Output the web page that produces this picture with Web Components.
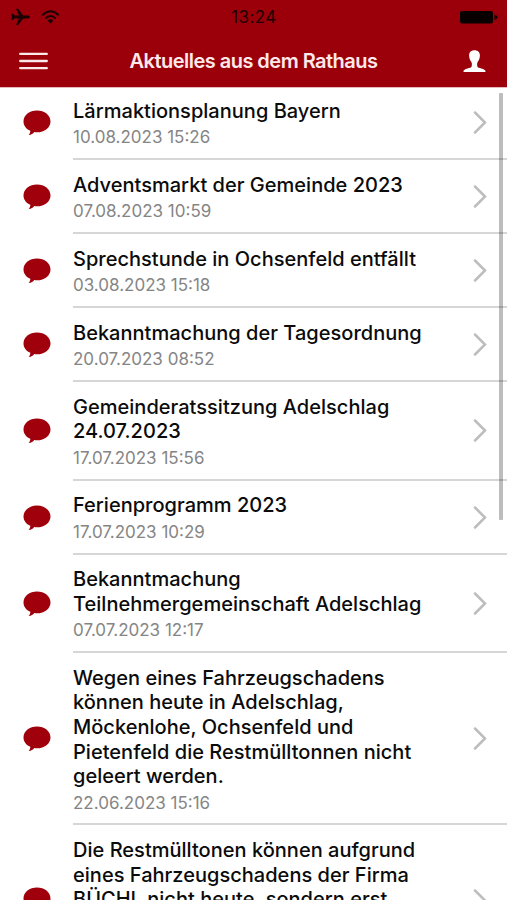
<!DOCTYPE html>
<html lang="de">
  <head>
    <meta charset="UTF-8" />
    <meta name="viewport" content="width=device-width, initial-scale=1.0" />
    <title>Aktuelles aus dem Rathaus</title>
    <style>
      html,
      body {
        margin: 0;
        height: 100%;
        overflow: hidden;
        background: #fff;
        font-family: Inter, "Liberation Sans", sans-serif;
      }
    </style>
  </head>

  <body>
    <template id="app-template">
      <style>
        :host {
          display: flex;
          flex-direction: column;
          height: 900px;
          overflow: hidden;
        }

        main {
          flex: 1;
          min-height: 0;
          position: relative;
          overflow: hidden;
        }

        .list {
          display: flex;
          flex-direction: column;
          margin-top: -2px;
        }

        .scrollbar {
          position: absolute;
          top: 5px;
          right: 4.5px;
          width: 4px;
          height: 427px;
          border-radius: 1px;
          background: rgba(0, 0, 0, 0.26);
        }
      </style>
      <slot name="header"></slot>
      <main>
        <div class="list"><slot></slot></div>
        <div class="scrollbar"></div>
      </main>
    </template>

    <template id="header-template">
      <style>
        :host {
          display: block;
          flex: none;
          height: 88px;
          background: #9b000a;
          border-bottom: 1px solid #e8b9bb;
          box-sizing: border-box;
        }

        svg {
          display: block;
        }

        .status,
        .bar {
          display: grid;
          grid-template-columns: 1fr auto 1fr;
          align-items: center;
        }

        .status {
          height: 34px;
          padding: 0 9px 0 10px;
          color: #1c0002;
          font-size: 17px;
          letter-spacing: 0.4px;
        }

        .left {
          display: flex;
          gap: 11px;
          align-items: center;
        }

        .right {
          justify-self: end;
        }

        .bar {
          height: 54px;
          padding: 0 19px 0 19px;
          color: #fbe9ea;
        }

        .bar .right {
          margin-right: 2px;
        }

        .title {
          font-size: 20px;
          font-weight: 600;
          letter-spacing: -0.52px;
          white-space: nowrap;
        }
      </style>
      <div class="status">
        <div class="left">
          <svg width="20" height="18" viewBox="0 0 20 18">
            <path d="M1 5.5h1.5L5 7.6l4-.2L6 .8h2.2l5 6.6h4.7c1.1 0 2 .7 2 1.5s-.9 1.5-2 1.5h-4.7l-5 6.6H6l3-6.6-4-.2-2.5 2.1H1l1-3.4z" fill="#1c0002" />
          </svg>
          <svg width="19" height="14" viewBox="0 0 19 14" fill="none" stroke="#1c0002" stroke-width="2">
            <path d="M1.2 5.2Q9.5-2.6 17.8 5.2M4.4 8.4Q9.5 3.6 14.6 8.4" />
            <path d="M6.6 10.7Q9.5 8 12.4 10.7L9.5 13.6z" fill="#1c0002" stroke="none" />
          </svg>
        </div>
        <span><slot name="time"></slot></span>
        <svg class="right" width="38" height="14" viewBox="0 0 38 14">
          <rect x="0" y="1" width="33" height="12.5" rx="2" fill="#090000" />
          <path d="M34.5 4.5q3 1 3 2.7t-3 2.7z" fill="#090000" />
        </svg>
      </div>
      <div class="bar">
        <svg width="29" height="18" viewBox="0 0 29 18" stroke="#fbe9ea" stroke-width="2.3" stroke-linecap="round">
          <path d="M1.2 1.9h26.6M1.2 9h26.6M1.2 16.2h26.6" />
        </svg>
        <span class="title"><slot></slot></span>
        <svg class="right" width="23" height="23" viewBox="0 0 23 23">
          <path d="M11.5.2C7.9.2 6 2.3 6.1 5.8c.1 2.4 1 4.8 2.3 6.3.6 1.1.7 3.6 0 4.8-.8 1.1-6.3 1.5-7.7 3.6-.4.7-.3 1.5.2 1.5h21.2c.5 0 .6-.8.2-1.5-1.4-2.1-6.9-2.5-7.7-3.6-.7-1.2-.6-3.7 0-4.8 1.3-1.5 2.2-3.9 2.3-6.3C17 2.3 15.1.2 11.5.2z" fill="#fff" />
        </svg>
      </div>
    </template>

    <template id="news-template">
      <style>
        :host {
          display: flex;
          flex: none;
          align-items: stretch;
        }

        .icon {
          width: 73px;
          flex: none;
          display: flex;
          align-items: center;
          justify-content: center;
        }

        .row {
          flex: 1;
          display: flex;
          align-items: center;
          justify-content: space-between;
          padding: 12.8px 20px 10.5px 0;
          border-bottom: 2px solid #d6d6d6;
        }

        .text {
          align-self: flex-start;
        }

        .title {
          font-size: 20px;
          line-height: 24.6px;
          font-weight: 460;
          letter-spacing: 0.02px;
          color: #0b0b0b;
          white-space: nowrap;
        }

        .date {
          margin-top: 3.7px;
          font-size: 17px;
          line-height: 20.4px;
          color: #858585;
        }
      </style>
      <div class="icon">
        <svg width="28" height="26" viewBox="0 0 28 26">
          <path d="M14 .5C6.5.5.5 5.2.5 11.4c0 4.1 2.7 7.5 6.8 9.4.1 1.5-.5 2.8-1.6 4.2 2.6-.1 4.4-1.2 5.5-2.9.9.2 1.8.2 2.8.2 7.5 0 13.5-4.7 13.5-10.9S21.5.5 14 .5z" fill="#a0000b" />
        </svg>
      </div>
      <div class="row">
        <div class="text">
          <div class="title"><slot></slot></div>
          <div class="date"><slot name="date"></slot></div>
        </div>
        <svg width="14" height="24" viewBox="0 0 14 24" fill="none" stroke="#bdbdbd" stroke-width="2.5" stroke-linecap="round">
          <path d="M2 1.5l10 10L2 21.5" />
        </svg>
      </div>
    </template>

    <rathaus-app>
      <rathaus-header slot="header">
        <span slot="time">13:24</span>
        Aktuelles aus dem Rathaus
      </rathaus-header>
      <news-item>Lärmaktionsplanung Bayern<span slot="date">10.08.2023 15:26</span></news-item>
      <news-item>Adventsmarkt der Gemeinde 2023<span slot="date">07.08.2023 10:59</span></news-item>
      <news-item>Sprechstunde in Ochsenfeld entfällt<span slot="date">03.08.2023 15:18</span></news-item>
      <news-item>Bekanntmachung der Tagesordnung<span slot="date">20.07.2023 08:52</span></news-item>
      <news-item>Gemeinderatssitzung Adelschlag<br />24.07.2023<span slot="date">17.07.2023 15:56</span></news-item>
      <news-item>Ferienprogramm 2023<span slot="date">17.07.2023 10:29</span></news-item>
      <news-item>Bekanntmachung<br />Teilnehmergemeinschaft Adelschlag<span slot="date">07.07.2023 12:17</span></news-item>
      <news-item>Wegen eines Fahrzeugschadens<br />können heute in Adelschlag,<br />Möckenlohe, Ochsenfeld und<br />Pietenfeld die Restmülltonnen nicht<br />geleert werden.<span slot="date">22.06.2023 15:16</span></news-item>
      <news-item style="height: 150px">Die Restmülltonen können aufgrund<br />eines Fahrzeugschadens der Firma<br />BÜCHL nicht heute, sondern erst</news-item>
    </rathaus-app>

    <script>
      function define(name, templateId) {
        customElements.define(
          name,
          class extends HTMLElement {
            constructor() {
              super();
              const shadowRoot = this.attachShadow({ mode: "open" });
              const template = document.querySelector(templateId);
              shadowRoot.appendChild(template.content.cloneNode(true));
            }
          }
        );
      }

      define("rathaus-app", "#app-template");
      define("rathaus-header", "#header-template");
      define("news-item", "#news-template");
    </script>
  </body>
</html>
